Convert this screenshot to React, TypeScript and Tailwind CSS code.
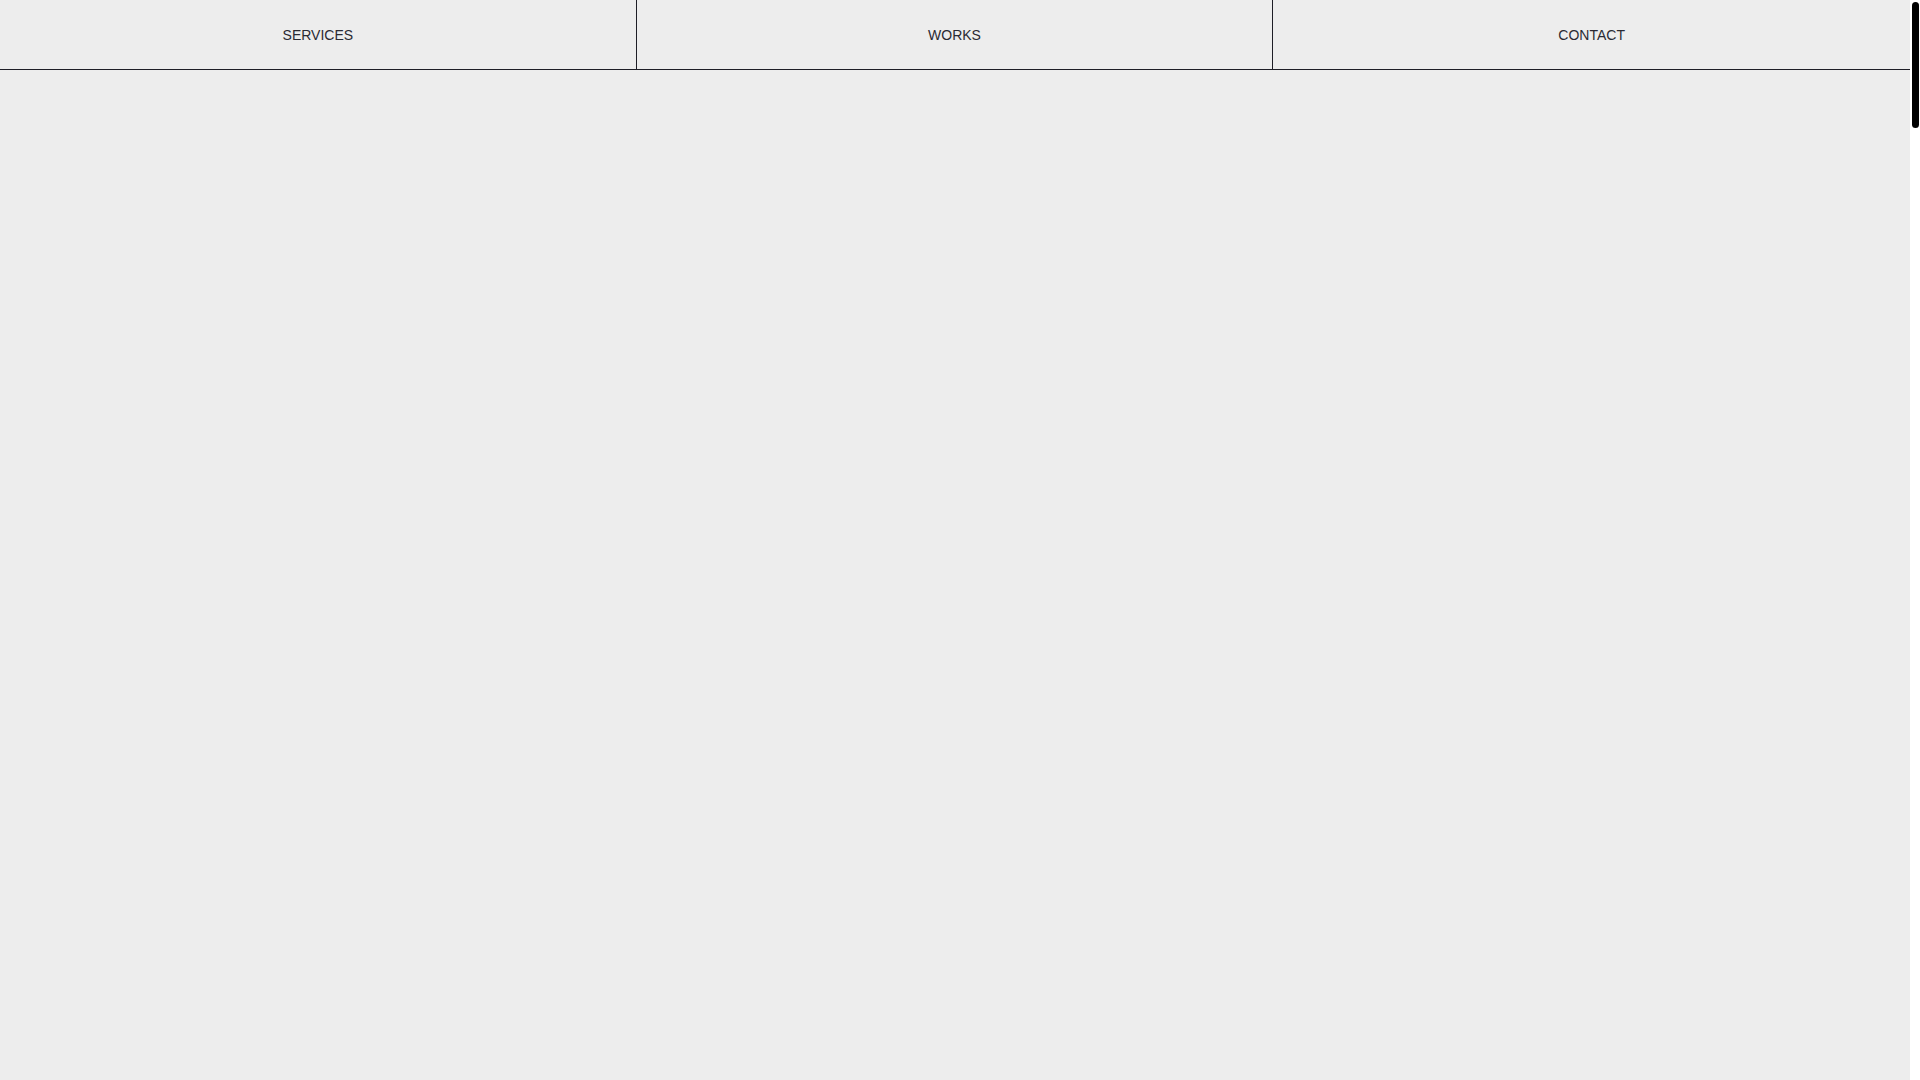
const links = ["Services", "Works", "Contact"];

export default function App() {
  return (
    <div className="flex h-screen overflow-hidden bg-white font-['Liberation_Sans',Arial,sans-serif] text-[#2a2a33]">
      <main className="flex-1 bg-[#ededed]">
        <nav className="grid h-[70px] grid-cols-3 border-b border-[#1e1e26]">
          {links.map((label, i) => (
            <a
              key={label}
              href={`#${label.toLowerCase()}`}
              className={
                "flex items-center justify-center text-[14px] uppercase leading-none" +
                (i < links.length - 1 ? " border-r border-[#1e1e26]" : "")
              }
            >
              {label}
            </a>
          ))}
        </nav>
      </main>

      {/* page scroll track */}
      <div className="w-[10px] shrink-0 bg-white pl-[1.5px] pt-[2px]">
        <div className="h-[126px] w-[7px] rounded-full bg-black" />
      </div>
    </div>
  );
}
